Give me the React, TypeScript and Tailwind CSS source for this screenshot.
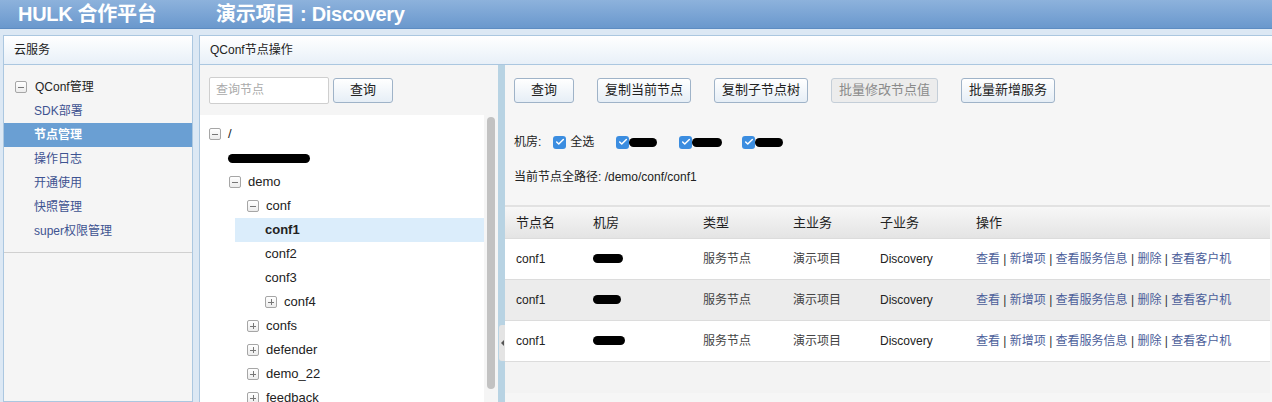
import { Check } from "lucide-react";

const font = {
  fontFamily: '"Liberation Sans", "Noto Sans CJK SC", Arial, sans-serif',
};

function ToggleBox({ open }: { open: boolean }) {
  return (
    <span className="relative inline-flex h-[12px] w-[12px] shrink-0 items-center justify-center rounded-[2px] border border-[#a6a6a6] bg-gradient-to-b from-white to-[#ececec]">
      <span className="absolute h-[1px] w-[6px] bg-[#777]" />
      {!open && <span className="absolute h-[6px] w-[1px] bg-[#777]" />}
    </span>
  );
}

function Blob({ w }: { w: string }) {
  return <span className={`inline-block h-[9px] rounded-full bg-black ${w}`} />;
}

function Btn({ label, w, disabled }: { label: string; w: string; disabled?: boolean }) {
  return (
    <button
      className={`h-[25px] ${w} rounded-[3px] border text-[13px] ${
        disabled
          ? "border-[#c4ced8] bg-[#ececec] text-[#8a8a8a]"
          : "border-[#9fb3c8] bg-gradient-to-b from-white to-[#e6eef6] text-[#222]"
      }`}
    >
      {label}
    </button>
  );
}

function Check13() {
  return (
    <span className="inline-flex h-[13px] w-[13px] items-center justify-center rounded-[3px] bg-[#3b8de0]">
      <Check className="h-[10px] w-[10px] text-white" strokeWidth={3.5} />
    </span>
  );
}

const menu = ["SDK部署", "节点管理", "操作日志", "开通使用", "快照管理", "super权限管理"];

type Node = { label: string; pad: string; box?: "open" | "closed"; selected?: boolean; hidden?: boolean };

const tree: Node[] = [
  { label: "/", pad: "pl-[9px]", box: "open" },
  { label: "", pad: "pl-[28px]", hidden: true },
  { label: "demo", pad: "pl-[29px]", box: "open" },
  { label: "conf", pad: "pl-[47px]", box: "open" },
  { label: "conf1", pad: "pl-[65px]", selected: true },
  { label: "conf2", pad: "pl-[65px]" },
  { label: "conf3", pad: "pl-[65px]" },
  { label: "conf4", pad: "pl-[65px]", box: "closed" },
  { label: "confs", pad: "pl-[47px]", box: "closed" },
  { label: "defender", pad: "pl-[47px]", box: "closed" },
  { label: "demo_22", pad: "pl-[47px]", box: "closed" },
  { label: "feedback", pad: "pl-[47px]", box: "closed" },
];

const rows = [
  { blob: "w-[30px]", bg: "bg-white" },
  { blob: "w-[28px]", bg: "bg-[#ececec]" },
  { blob: "w-[32px]", bg: "bg-white" },
];

export default function App() {
  return (
    <div style={font} className="flex h-[402px] w-full flex-col overflow-hidden bg-[#dce8f4] text-[12px] text-[#222]">
      {/* top bar */}
      <div className="flex h-[29px] shrink-0 items-center border-b border-[#5d8cc2] bg-gradient-to-b from-[#8db2dc] to-[#6a98cd] text-[20px] text-white">
        <span className="ml-[18px] w-[198px] font-bold tracking-[-0.3px]">HULK 合作平台</span>
        <span className="font-bold tracking-[-0.3px]">演示项目 : Discovery</span>
      </div>

      <div className="flex min-h-0 flex-1 gap-[6px] pl-[3px] pt-[6px]">
        {/* left nav */}
        <div className="flex w-[190px] shrink-0 flex-col border border-[#abc7e0] bg-[#f5f5f5]">
          <div className="flex h-[29px] shrink-0 items-center border-b border-[#abc7e0] bg-gradient-to-b from-white to-[#e8f0f8] pl-[10px]">
            云服务
          </div>
          <div className="border-b border-[#d0d0d0] pb-[9px] pt-[10px]">
            <div className="flex h-[24px] items-center pl-[11px]">
              <ToggleBox open />
              <span className="ml-[8px]">QConf管理</span>
            </div>
            {menu.map((m) => (
              <div
                key={m}
                className={`flex h-[24px] items-center pl-[30px] ${
                  m === "节点管理" ? "bg-[#6a9fd3] font-bold text-white" : "text-[#3e5391]"
                }`}
              >
                {m}
              </div>
            ))}
          </div>
        </div>

        {/* main panel */}
        <div className="flex min-w-0 flex-1 flex-col border-l border-t border-[#abc7e0] bg-white">
          <div className="flex h-[29px] shrink-0 items-center border-b border-[#abc7e0] bg-gradient-to-b from-white to-[#e8f0f8] pl-[10px]">
            QConf节点操作
          </div>
          <div className="flex min-h-0 flex-1">
            {/* tree column */}
            <div className="flex w-[298px] shrink-0 flex-col bg-[#f5f5f5]">
              <div className="flex h-[50px] shrink-0 items-center gap-[4px] pl-[9px]">
                <div className="flex h-[27px] w-[120px] items-center rounded-[2px] border border-[#cfcfcf] bg-white pl-[6px] text-[#aaa]">
                  查询节点
                </div>
                <Btn label="查询" w="w-[60px]" />
              </div>
              <div className="flex min-h-0 flex-1">
                <div className="flex-1 bg-white pt-[7px]">
                  {tree.map((n, i) => (
                    <div key={i} className={`flex h-[24px] items-center ${n.pad}`}>
                      {n.hidden ? (
                        <Blob w="w-[82px]" />
                      ) : (
                        <div
                          className={`flex h-[24px] items-center ${
                            n.selected ? "-ml-[30px] flex-1 bg-[#dbedfb] pl-[30px] font-bold" : ""
                          }`}
                        >
                          {n.box && <ToggleBox open={n.box === "open"} />}
                          <span className={`text-[13px] ${n.box ? "ml-[7px]" : ""}`}>{n.label}</span>
                        </div>
                      )}
                    </div>
                  ))}
                </div>
                <div className="w-[14px] shrink-0 pt-[2px]">
                  <div className="ml-[3px] h-[272px] w-[8px] rounded-full bg-[#c2c2c2]" />
                </div>
              </div>
            </div>

            {/* splitter */}
            <div className="relative w-[7px] shrink-0 bg-[#b8d3e3]">
              <div className="absolute left-[1px] top-[260px] flex h-[36px] w-[6px] items-center justify-center rounded-l-[3px] bg-[#e4e4e4]">
                <span className="h-0 w-0 border-y-[3px] border-r-[3px] border-y-transparent border-r-[#555]" />
              </div>
            </div>

            {/* right content */}
            <div className="min-w-0 flex-1 bg-[#f6f6f6] pr-[2px]">
              <div className="flex h-[50px] items-center gap-[23px] pl-[9px]">
                <Btn label="查询" w="w-[60px]" />
                <Btn label="复制当前节点" w="w-[94px]" />
                <Btn label="复制子节点树" w="w-[94px]" />
                <Btn label="批量修改节点值" w="w-[107px]" disabled />
                <Btn label="批量新增服务" w="w-[94px]" />
              </div>
              <div className="flex h-[40px] items-center pl-[9px] pt-[14px]">
                <span>机房:</span>
                <span className="ml-[12px] flex items-center gap-[4px]">
                  <Check13 />
                  全选
                </span>
                <span className="ml-[22px] flex items-center">
                  <Check13 />
                  <Blob w="w-[28px]" />
                </span>
                <span className="ml-[22px] flex items-center">
                  <Check13 />
                  <Blob w="w-[30px]" />
                </span>
                <span className="ml-[20px] flex items-center">
                  <Check13 />
                  <Blob w="w-[28px]" />
                </span>
              </div>
              <div className="flex h-[36px] items-center pl-[9px] pt-[8px]">当前节点全路径: /demo/conf/conf1</div>

              <div className="mt-[14px] border-t-[2px] border-[#e2e2e2]">
                <div className="flex h-[32px] items-center border-b border-[#dcdcdc] bg-gradient-to-b from-[#f7f7f7] to-[#e4e4e4] text-[13px]">
                  <span className="w-[77px] pl-[11px]">节点名</span>
                  <span className="w-[110px] pl-[11px]">机房</span>
                  <span className="w-[90px] pl-[11px]">类型</span>
                  <span className="w-[87px] pl-[11px]">主业务</span>
                  <span className="w-[96px] pl-[11px]">子业务</span>
                  <span className="pl-[11px]">操作</span>
                </div>
                {rows.map((r, i) => (
                  <div key={i} className={`flex h-[41px] items-center border-b border-[#dcdcdc] ${r.bg}`}>
                    <span className="w-[77px] pl-[11px]">conf1</span>
                    <span className="w-[110px] pl-[11px]">
                      <Blob w={r.blob} />
                    </span>
                    <span className="w-[90px] pl-[11px] text-[#444]">服务节点</span>
                    <span className="w-[87px] pl-[11px] text-[#444]">演示项目</span>
                    <span className="w-[96px] pl-[11px]">Discovery</span>
                    <span className="pl-[11px] text-[#4b5e9a]">
                      查看 <span className="text-[#333]">|</span> 新增项{" "}
                      <span className="text-[#333]">|</span> 查看服务信息{" "}
                      <span className="text-[#333]">|</span> 删除{" "}
                      <span className="text-[#333]">|</span> 查看客户机
                    </span>
                  </div>
                ))}
                <div className="h-[31px] bg-[#f3f3f3]" />
              </div>
            </div>
          </div>
        </div>
      </div>
    </div>
  );
}
